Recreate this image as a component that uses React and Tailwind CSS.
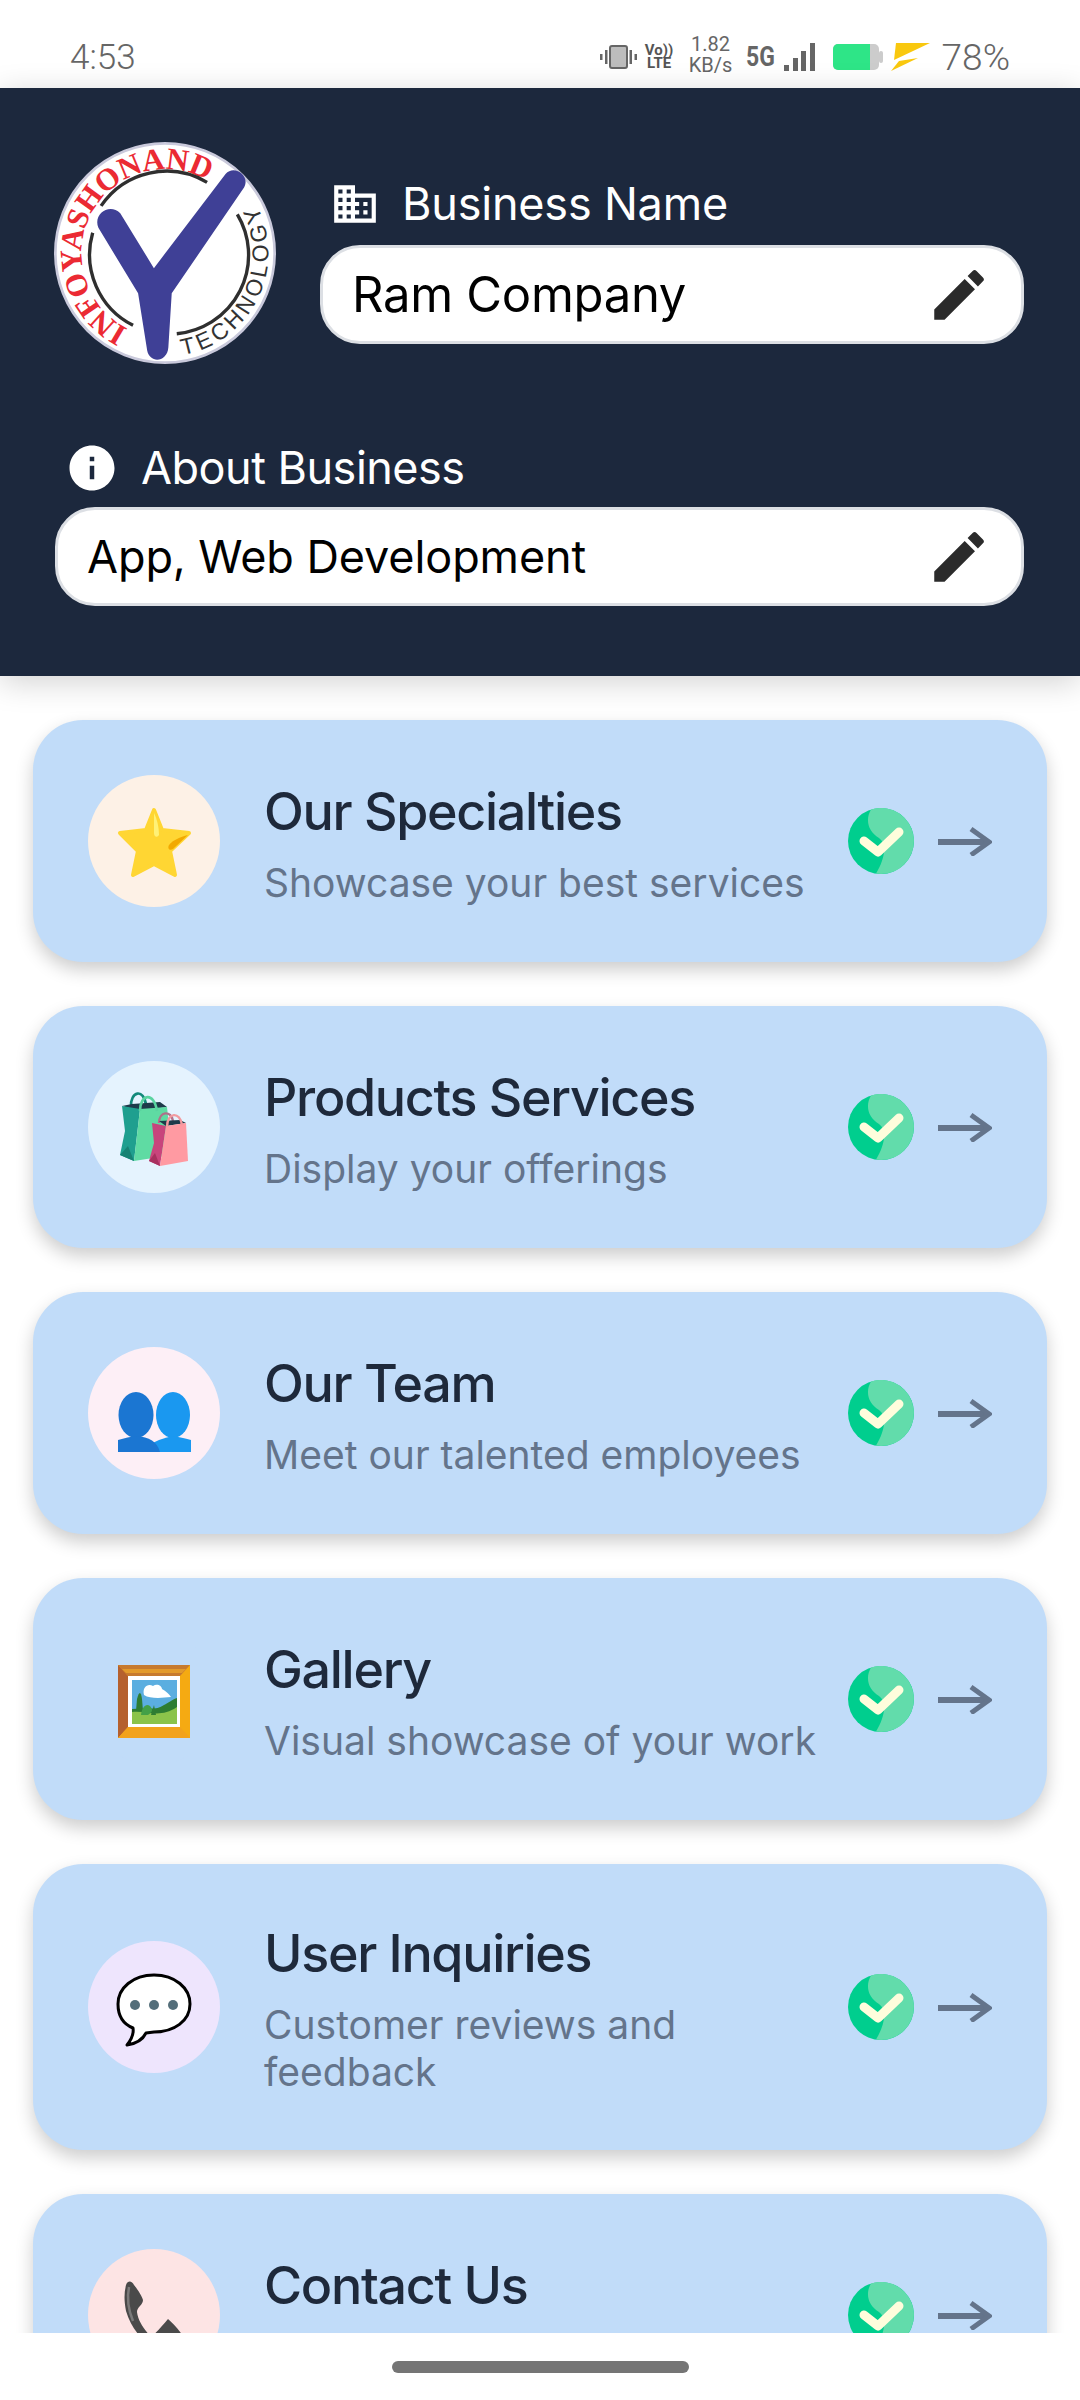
import React from "react";
import { MdEdit, MdInfo, MdBusiness } from "react-icons/md";

const Star = () => (
  <svg viewBox="0 0 132 132" className="w-[132px] h-[132px]">
    <path d="M66 35 L74 55 L101 58 L82 76 L87 100 L66 89 L45 100 L50 76 L32 58 L58 55 Z" fill="#FFD633" stroke="#FFD633" strokeWidth="4" strokeLinejoin="round" />
    <path d="M66 38 C69 44 71 52 71 60 C69 63 66 62 66 58 Z" fill="#FFF176" />
    <path d="M100 60 C92 62 85 65 81 70 C79 74 82 76 85 74 Z" fill="#F2A900" />
  </svg>
);

const Bags = () => (
  <svg viewBox="0 0 132 132" className="w-[132px] h-[132px]">
    <path d="M43 46 C42 30 56 27 58 44" fill="none" stroke="#13897A" strokeWidth="2.6" />
    <path d="M34 45 L44 43 L72 41 L79 46 L52 50 Z" fill="#1E3A4A" />
    <path d="M34 45 L52 48 L46 100 L32 94 L37 70 Z" fill="#1F9F8F" />
    <path d="M52 48 L79 46 L84 94 L46 100 Z" fill="#5FDBA3" />
    <path d="M32 94 L40 85 L46 100 Z" fill="#178273" />
    <path d="M52 50 C52 33 66 30 69 50" fill="none" stroke="#5AD3A0" strokeWidth="2.6" />
    <path d="M71 62 C71 50 83 49 85 60" fill="none" stroke="#B0708A" strokeWidth="2.4" />
    <path d="M71 60 L92 59 L98 62 L78 65 Z" fill="#1E3A4A" />
    <path d="M64 62 L78 65 L72 105 L61 100 L66 82 Z" fill="#C8447C" />
    <path d="M78 65 L98 62 L100 100 L72 105 Z" fill="#FF9AA2" />
    <path d="M61 100 L67 92 L72 105 Z" fill="#A8305F" />
    <path d="M79 66 C79 51 92 50 94 64" fill="none" stroke="#F29A9F" strokeWidth="2.4" />
  </svg>
);

const People = () => (
  <svg viewBox="0 0 132 132" className="w-[132px] h-[132px]">
    <ellipse cx="85" cy="68" rx="17" ry="23" fill="#1A98F0" />
    <path d="M59 105 L62 98 Q70 92 85 89 Q96 91 103 93 V105 Z" fill="#1A98F0" />
    <ellipse cx="48" cy="68" rx="17.5" ry="23" fill="#1B76D2" />
    <path d="M30 93 Q40 90 48 89 Q68 90 72 105 H30 Z" fill="#1B76D2" />
  </svg>
);

const Picture = () => (
  <svg viewBox="0 0 132 132" className="w-[132px] h-[132px]">
    <rect x="30" y="32" width="72" height="73" fill="#F5AA12" />
    <path d="M30 32 H102 L92 43 H40 Z" fill="#C77A2E" />
    <path d="M30 32 L40 43 V94 L30 105 Z" fill="#B5602E" />
    <path d="M30 105 L40 94 H92 L102 105 Z" fill="#F2A21C" />
    <path d="M34 36 H98 L94 40 H38 Z" fill="#E39A2B" />
    <rect x="40" y="43" width="52" height="51" fill="#FFFFFF" />
    <rect x="44" y="47" width="45" height="44" fill="#5BAEE0" />
    <path d="M44 91 V76 C58 74 68 78 76 72 C80 70 85 66 89 65 V91 Z" fill="#2E7D32" />
    <path d="M44 91 V79 C58 77 72 86 89 74 V91 Z" fill="#8BC34A" />
    <path d="M49 66 C51 58 53 58 54 66 L55 78 H48 Z" fill="#2E7D32" />
    <path d="M53 82 C54 74 58 70 62 73 C64 76 66 78 60 82 Z" fill="#43A047" />
    <path d="M63 82 L66 72 L68 82 Z" fill="#2E7D32" />
    <path d="M56 62 C54 54 60 50 65 53 C69 50 74 53 74 56 C78 58 81 61 83 64 C74 65 62 66 56 62 Z" fill="#FFFFFF" />
  </svg>
);

const Speech = () => (
  <svg viewBox="0 0 132 132" className="w-[132px] h-[132px]">
    <path d="M66 34 C87 34 102 47 102 63 C102 80 86 91 66 91 L58 92 C54 100 46 103 39 104 C43 99 46 93 45 87 C35 83 30 74 30 63 C30 47 45 34 66 34 Z" fill="#FFFFFF" stroke="#000000" strokeWidth="3" strokeLinejoin="round" />
    <circle cx="47" cy="64" r="5" fill="#546E7A" />
    <circle cx="66" cy="64" r="5" fill="#546E7A" />
    <circle cx="85" cy="64" r="5" fill="#546E7A" />
  </svg>
);

const Phone = () => (
  <svg viewBox="0 0 132 132" className="w-[132px] h-[132px]">
    <path d="M38 36 C40 31 44 32 46 36 C50 41 54 47 55 51 C55 56 49 58 49 63 C50 72 56 80 63 88 C68 84 75 76 80 70 C85 74 92 82 97 90 C98 96 92 100 86 102 C66 104 46 88 38 62 C36 52 36 44 38 36 Z" fill="#4A4A4A" />
    <path d="M41 38 C39 48 40 60 45 72" fill="none" stroke="#7A7A7A" strokeWidth="2.5" />
  </svg>
);

const Check = () => (
  <svg viewBox="0 0 66 66" className="w-[66px] h-[66px] shrink-0">
    <circle cx="33" cy="33" r="33" fill="#00CE8E" />
    <path d="M23 1.5 C17 12 20 23 31 30 C40 37 36 52 28 65.6 A33 33 0 1 0 23 1.5 Z" fill="#62DCAB" />
    <path d="M16 33 L30 44 L51 24" fill="none" stroke="#FFFDDC" strokeWidth="9" strokeLinecap="round" strokeLinejoin="round" />
  </svg>
);

const Arrow = () => (
  <svg viewBox="0 0 54 30" className="w-[54px] h-[30px] shrink-0">
    <path d="M0 16 H50" stroke="#64748B" strokeWidth="6" fill="none" />
    <path d="M33 3 L51 16 L33 29" stroke="#64748B" strokeWidth="5" fill="none" />
  </svg>
);

const Logo = () => (
  <svg viewBox="75 70 660 660" className="w-[222px] h-[222px] shrink-0">
    <circle cx="405" cy="400" r="326" fill="#FFFFFF" stroke="#C9C9DB" strokeWidth="8" />
    <path id="logoRed" d="M295 625 A250 250 0 1 1 537 188" fill="none" />
    <path id="logoBlack" d="M458 703 A308 308 0 0 0 679 260" fill="none" />
    <text className="font-['Liberation_Serif',serif] font-bold" fontSize="92" fill="#EB2A33">
      <textPath href="#logoRed" textLength="800" lengthAdjust="spacing">INFOYASHONAND</textPath>
    </text>
    <text className="font-['Liberation_Sans',sans-serif]" fontSize="68" fill="#333333">
      <textPath href="#logoBlack" textLength="575" lengthAdjust="spacing">TECHNOLOGY</textPath>
    </text>
    <path d="M215 260 A235 235 0 0 1 530 190" fill="none" stroke="#2F2F2F" strokeWidth="10" />
    <path d="M190 340 A235 235 0 0 0 310 615" fill="none" stroke="#2F2F2F" strokeWidth="10" />
    <path d="M440 640 A235 235 0 0 0 620 285" fill="none" stroke="#2F2F2F" strokeWidth="10" />
    <path d="M207 325 C190 285 240 250 272 282 L372 445 L585 165 C610 135 660 170 640 205 L425 520 L415 680 C412 725 360 730 352 690 L325 520 Z" fill="#3F4096" />
  </svg>
);

const Field = ({ value, size }) => (
  <div className="flex items-center justify-between h-[99px] rounded-[40px] bg-white border-[3px] border-[#dcdfe4] pl-[29px] pr-[29px]">
    <span className={`text-black ${size}`}>{value}</span>
    <MdEdit className="text-[#2b2b2b] w-[66px] h-[66px]" />
  </div>
);

const cards = [
  { title: "Our Specialties", sub: "Showcase your best services", bg: "bg-[#fdf1e6]", Icon: Star },
  { title: "Products Services", sub: "Display your offerings", bg: "bg-[#e5f3fe]", Icon: Bags },
  { title: "Our Team", sub: "Meet our talented employees", bg: "bg-[#fdeff6]", Icon: People },
  { title: "Gallery", sub: "Visual showcase of your work", bg: "bg-[#c1dcf9]", Icon: Picture },
  { title: "User Inquiries", sub: "Customer reviews and feedback", bg: "bg-[#eee5fd]", Icon: Speech },
  { title: "Contact Us", sub: "How customers reach you", bg: "bg-[#fde4e4]", Icon: Phone },
];

const Card = ({ title, sub, bg, Icon }) => (
  <div className="flex items-center shrink-0 rounded-[50px] bg-[#c1dcf9] pl-[55px] pr-[55px] py-[55px] shadow-[0_8px_18px_rgba(0,0,0,0.2)]">
    <div className={`flex items-center justify-center w-[132px] h-[132px] rounded-full shrink-0 ${bg}`}>
      <Icon />
    </div>
    <div className="flex-1 min-w-0 ml-[44px] mr-[18px]">
      <div className="text-[#1e293b] text-[52px] tracking-[-1.3px] leading-[70px] font-medium mb-[12px]">{title}</div>
      <div className="text-[#64748b] text-[39px] leading-[47px]">{sub}</div>
    </div>
    <Check />
    <div className="ml-[24px]"><Arrow /></div>
  </div>
);

const StatusBar = () => (
  <div className="flex items-center h-[88px] bg-white pt-[26px] pl-[70px] pr-[70px] font-['Roboto',sans-serif] text-[#666666]">
    <span className="text-[35px] font-light leading-none">4:53</span>
    <div className="flex-1" />
    <svg viewBox="0 0 37 24" className="w-[37px] h-[24px]">
      <rect x="0" y="9" width="2.5" height="6" fill="#666" />
      <rect x="5" y="5" width="2.5" height="14" fill="#666" />
      <rect x="10" y="1" width="17" height="22" rx="2" fill="#BDBDBD" stroke="#666" strokeWidth="2" />
      <rect x="29.5" y="5" width="2.5" height="14" fill="#666" />
      <rect x="34.5" y="9" width="2.5" height="6" fill="#666" />
    </svg>
    <div className="flex flex-col items-center ml-[9px] w-[27px] font-bold text-[15px] leading-[13px] text-[#555555]">
      <span>Vo))</span>
      <span>LTE</span>
    </div>
    <div className="flex flex-col items-center ml-[15px] w-[46px] text-[20px] leading-[21px] mb-[4px]">
      <span>1.82</span>
      <span>KB/s</span>
    </div>
    <span className="ml-[12px] text-[28px] font-bold leading-none text-[#666] scale-x-[0.82] origin-left w-[29px]">5G</span>
    <svg viewBox="0 0 31 28" className="ml-[9px] w-[31px] h-[28px]">
      <rect x="0" y="22" width="5" height="6" fill="#666" />
      <rect x="9" y="15" width="5" height="13" fill="#666" />
      <rect x="17" y="8" width="5" height="20" fill="#666" />
      <rect x="26" y="0" width="5" height="28" fill="#666" />
    </svg>
    <svg viewBox="0 0 50 26" className="ml-[18px] w-[50px] h-[26px]">
      <rect x="0" y="0" width="46" height="26" rx="5" fill="#CCCCCC" />
      <path d="M5 0 H37 V26 H5 A5 5 0 0 1 0 21 V5 A5 5 0 0 1 5 0 Z" fill="#2EE587" />
      <rect x="46" y="7" width="4" height="12" rx="2" fill="#CCCCCC" />
    </svg>
    <svg viewBox="0 0 39 28" className="ml-[8px] w-[39px] h-[28px]">
      <path d="M5 0 H39 L3 17 Z" fill="#F9C80E" />
      <path d="M8 18 L27 15 L0 28 Z" fill="#F9C80E" />
    </svg>
    <span className="ml-[12px] text-[37px] font-light leading-none">78%</span>
  </div>
);

export default function App() {
  return (
    <div className="w-[1080px] h-[2400px] flex flex-col bg-white overflow-hidden font-['Inter',sans-serif]">
      <StatusBar />
      <div className="relative z-10 h-[588px] shrink-0 bg-[#1c283d] pl-[54px] pr-[56px] pt-[54px] shadow-[0_6px_30px_rgba(0,0,0,0.18)]">
        <div className="flex items-start">
          <Logo />
          <div className="flex-1 ml-[44px] mt-[38px]">
            <div className="flex items-center h-[48px] mb-[17px] ml-[10px] text-white text-[45px] tracking-[-0.2px]">
              <MdBusiness className="w-[50px] h-[50px]" />
              <span className="ml-[22px]">Business Name</span>
            </div>
            <Field value="Ram Company" size="text-[49px] tracking-[-0.3px]" />
          </div>
        </div>
        <div className="flex items-center h-[48px] mt-[80px] mb-[15px] ml-[11px] text-white text-[45px] tracking-[-0.5px]">
          <MdInfo className="w-[54px] h-[54px]" />
          <span className="ml-[22px]">About Business</span>
        </div>
        <div className="ml-[1px]">
          <Field value="App, Web Development" size="text-[45px] tracking-[-0.1px]" />
        </div>
      </div>
      <div className="flex flex-col gap-[44px] h-[1657px] shrink-0 overflow-hidden px-[33px] pt-[44px] bg-white">
        {cards.map((c) => (
          <Card key={c.title} {...c} />
        ))}
      </div>
      <div className="flex-1 flex justify-center pt-[28px] bg-white">
        <div className="w-[297px] h-[12px] rounded-full bg-[#757575]" />
      </div>
    </div>
  );
}
